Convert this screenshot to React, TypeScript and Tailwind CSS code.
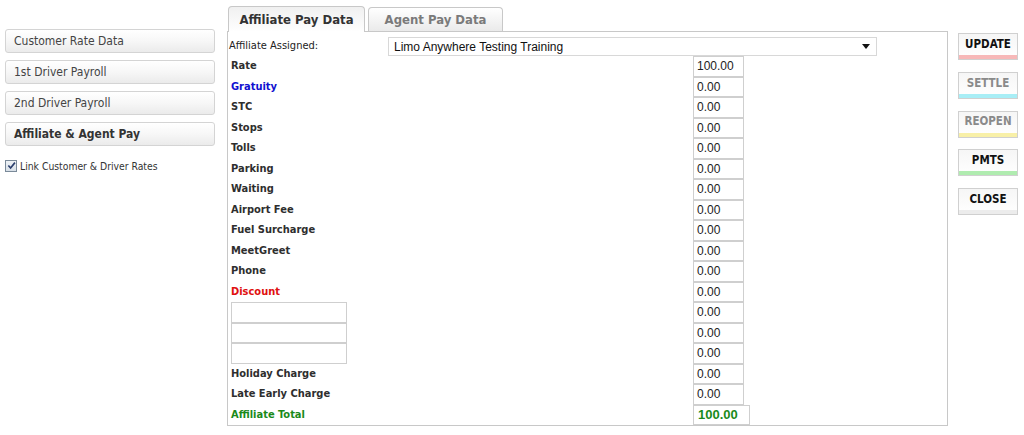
import React from "react";

const tahoma = "font-['DejaVu_Sans_Condensed','DejaVu_Sans',sans-serif]";
const arial = "font-['Liberation_Sans',Arial,sans-serif]";

const rows: { label: string; value: string; color?: string; blank?: boolean }[] = [
  { label: "Rate", value: "100.00" },
  { label: "Gratuity", value: "0.00", color: "text-[#1010d0]" },
  { label: "STC", value: "0.00" },
  { label: "Stops", value: "0.00" },
  { label: "Tolls", value: "0.00" },
  { label: "Parking", value: "0.00" },
  { label: "Waiting", value: "0.00" },
  { label: "Airport Fee", value: "0.00" },
  { label: "Fuel Surcharge", value: "0.00" },
  { label: "MeetGreet", value: "0.00" },
  { label: "Phone", value: "0.00" },
  { label: "Discount", value: "0.00", color: "text-[#e01010]" },
  { label: "", value: "0.00", blank: true },
  { label: "", value: "0.00", blank: true },
  { label: "", value: "0.00", blank: true },
  { label: "Holiday Charge", value: "0.00" },
  { label: "Late Early Charge", value: "0.00" },
];

function SideButton({ text, bold }: { text: string; bold?: boolean }) {
  return (
    <div
      className={`h-[24px] w-[210px] rounded-[3px] border border-[#d4d4d4] bg-gradient-to-b from-white via-[#f7f7f7] to-[#ebebeb] pl-[8px] flex items-center ${tahoma} ${
        bold ? "font-bold text-[12px] text-[#333]" : "text-[12px] text-[#444]"
      }`}
    >
      {text}
    </div>
  );
}

function ActionButton({ text, line, disabled }: { text: string; line: string; disabled?: boolean }) {
  return (
    <div
      className={`h-[27px] w-[60px] border border-[#d0d0d0] bg-gradient-to-b from-[#f6f6f6] to-white flex flex-col ${tahoma} font-bold text-[11.5px]`}
    >
      <div className={`flex-1 flex items-center justify-center ${disabled ? "text-[#8a8a8a]" : "text-[#111]"}`}>{text}</div>
      <div className={`h-[4px] ${line}`} />
    </div>
  );
}

export default function App() {
  return (
    <div className="w-[1024px] h-[435px] bg-white flex relative overflow-hidden">
      {/* Left column */}
      <div className="w-[227px] pl-[5px] pt-[29px] flex flex-col">
        <div className="flex flex-col gap-[7px]">
          <SideButton text="Customer Rate Data" />
          <SideButton text="1st Driver Payroll" />
          <SideButton text="2nd Driver Payroll" />
          <SideButton text="Affiliate & Agent Pay" bold />
        </div>
        <div className={`mt-[11px] flex items-center gap-[3px] ${tahoma} text-[10.3px] text-[#333]`}>
          <div className="w-[12px] h-[12px] border border-[#7a8a99] bg-gradient-to-b from-[#eef2f6] to-[#d8e0e8] flex items-center justify-center">
            <svg viewBox="0 0 10 10" className="w-[9px] h-[9px]">
              <path d="M1.5 5 L4 7.8 L8.8 1.8" stroke="#2b3f6e" strokeWidth="1.8" fill="none" />
            </svg>
          </div>
          <span className="pt-[2px]">Link Customer &amp; Driver Rates</span>
        </div>
      </div>

      {/* Center panel */}
      <div className="w-[721px] pt-[6px] flex flex-col">
        <div className="flex items-end pl-[1px] gap-[3px] h-[25px] relative z-10">
          <div className={`h-[26px] w-[137px] rounded-t-[4px] border border-b-0 border-[#c8c8c8] bg-gradient-to-b from-[#f0f0f0] to-white flex items-center justify-center ${tahoma} font-bold text-[13px] text-[#333] -mb-[1px]`}>
            Affiliate Pay Data
          </div>
          <div className={`h-[24px] w-[135px] rounded-t-[4px] border border-b-0 border-[#c8c8c8] bg-gradient-to-b from-white to-[#eaeaea] flex items-center justify-center ${tahoma} font-bold text-[13px] text-[#7a7a7a]`}>
            Agent Pay Data
          </div>
        </div>
        <div className="h-[395px] border border-[#c8c8c8] pl-[1px] pt-[5px]">
          <div className="flex items-center h-[19px]">
            <div className={`w-[159px] ${tahoma} text-[11px] text-[#222]`}>Affiliate Assigned:</div>
            <div className={`w-[489px] h-[19px] border border-[#d8d8d8] flex items-center justify-between pl-[5px] pr-[6px] ${arial} text-[12px] text-[#111]`}>
              <span>Limo Anywhere Testing Training</span>
              <svg viewBox="0 0 8 5" className="w-[8px] h-[5px]">
                <path d="M0 0 H8 L4 5 Z" fill="#111" />
              </svg>
            </div>
          </div>
          <div className="flex flex-col">
            {rows.map((r, i) => (
              <div key={i} className="flex items-center h-[20.5px]">
                <div className="w-[464px] pl-[2px]">
                  {r.blank ? (
                    <div className="w-[116px] h-[20.5px] border border-[#cfcfcf] bg-white" />
                  ) : (
                    <div className={`${tahoma} font-bold text-[11px] ${r.color ?? "text-[#2e2e2e]"}`}>{r.label}</div>
                  )}
                </div>
                <div className={`w-[51px] h-[20.5px] border border-[#cfcfcf] flex items-center pl-[3px] ${arial} text-[12px] text-[#222]`}>
                  {r.value}
                </div>
              </div>
            ))}
            <div className="flex items-center h-[20.5px]">
              <div className="w-[464px] pl-[2px]">
                <div className={`${tahoma} font-bold text-[11px] text-[#1a8a1a]`}>Affiliate Total</div>
              </div>
              <div className={`w-[57px] h-[20.5px] border border-[#cfcfcf] flex items-center pl-[4px] ${arial} font-bold text-[13px] text-[#1a8a1a]`}>
                100.00
              </div>
            </div>
          </div>
        </div>
      </div>

      {/* Right column */}
      <div className="pl-[10px] pt-[33px] flex flex-col gap-[11.75px]">
        <ActionButton text="UPDATE" line="bg-[#f7b8b8]" />
        <ActionButton text="SETTLE" line="bg-[#a8eef6]" disabled />
        <ActionButton text="REOPEN" line="bg-[#f8f0a8]" disabled />
        <ActionButton text="PMTS" line="bg-[#b0ecb0]" />
        <ActionButton text="CLOSE" line="bg-[#ececec]" />
      </div>
    </div>
  );
}
